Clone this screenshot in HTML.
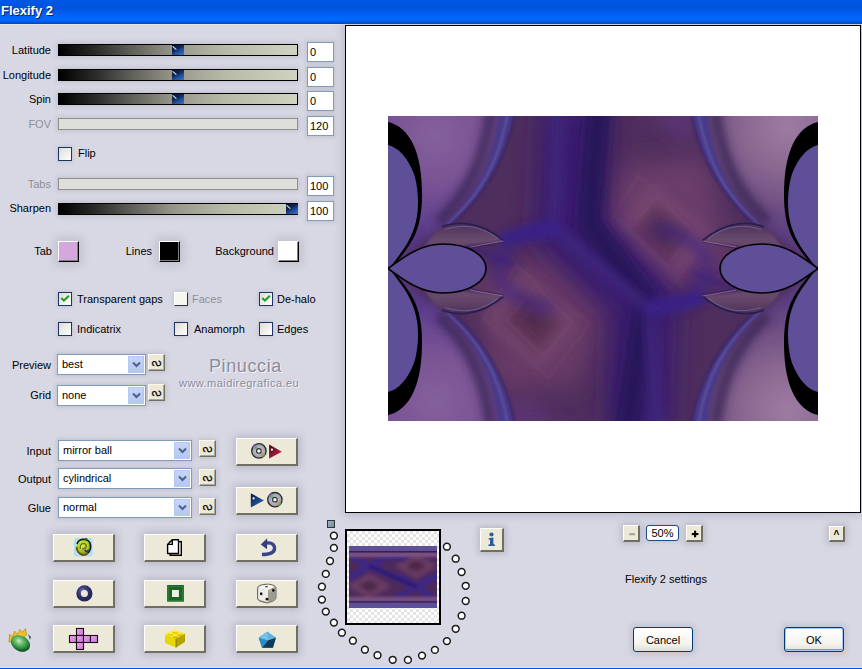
<!DOCTYPE html>
<html><head><meta charset="utf-8">
<style>
*{box-sizing:border-box}
html,body{margin:0;padding:0}
body{width:862px;height:669px;overflow:hidden;position:relative;background:#D8D8E4;font-family:"Liberation Sans",sans-serif;font-size:11px;color:#000}
.a{position:absolute}
#title{left:0;top:0;width:862px;height:25px;background:linear-gradient(#0058E4 0px,#0054DC 8px,#005CEC 12px,#0066FC 17px,#0068FF 20px,#0058E8 22px,#0040C0 24px,#E6E4E8 24px,#E6E4E8 25px)}
#title span{position:absolute;left:1px;top:3px;font-size:13px;font-weight:bold;color:#fff;text-shadow:1px 1px 0 #0A1E6A}
.lbl{position:absolute;text-align:right;white-space:nowrap;line-height:13px}
.trk{position:absolute;left:58px;width:240px;height:12px;border:1px solid #000;background:linear-gradient(90deg,#000 0%,#2a2a28 15%,#5e5e58 30%,#96968a 48%,#b8baa8 70%,#d0d3c0 100%);box-shadow:0 0 5px 1px rgba(90,90,120,.22)}
.trk.dis{background:#DEDEDA;border:1px solid #8E8E8C;box-shadow:0 0 5px 1px rgba(90,90,120,.18)}
.knob{position:absolute;top:0;width:12px;height:10px;background:linear-gradient(150deg,#081634 0%,#0E2654 40%,#1E4E9C 62%,#3676CC 100%)}
.knob:after{content:"";position:absolute;left:1px;top:0.5px;width:5px;height:1.1px;background:#E8ECF4;transform:rotate(42deg);transform-origin:0 0}
.inp{position:absolute;left:307px;width:27px;height:20px;background:#fff;border:1px solid #7F9DB9;padding:3px 0 0 2px;line-height:13px;font-size:11px;box-shadow:0 0 4px 1px rgba(90,90,120,.2)}
.cb{position:absolute;width:14px;height:14px;border:1.5px solid #1C3466;background:linear-gradient(135deg,#DCDCD6,#FFFFFF);box-shadow:0 0 4px rgba(90,90,120,.25)}
.cb.dis{border-color:#fff #333 #333 #fff;background:#F6F6F0}
.cb svg{position:absolute;left:-1.5px;top:-1.5px}
.sw{position:absolute;width:21px;height:21px;border-style:solid;border-width:1px;border-color:#fff #000 #000 #fff;box-shadow:inset -1px -1px 0 #808080,0 0 10px 3px rgba(90,90,120,.2)}
.dd{position:absolute;height:21px;background:#fff;border:1px solid #7F9DB9;line-height:18px;padding-left:4px;font-size:11px;box-shadow:0 0 4px 1px rgba(90,90,120,.2)}
.dd b{position:absolute;right:1px;top:1px;width:16px;height:17px;background:linear-gradient(#C6D4F7,#B4C8F4);border:1px solid #B6C8F0}
.dd b svg{position:absolute;left:3px;top:4px}
.sb{position:absolute;width:17px;height:17px;background:#ECE9D8;border-style:solid;border-width:1px;border-color:#F8F8F0 #716F64 #716F64 #F8F8F0;box-shadow:inset -1px -1px 0 #ACA899,0 0 5px 1px rgba(90,90,120,.22);font-weight:bold;font-size:11px;text-align:center;line-height:14px}
.sb span{position:absolute;left:0.5px;top:0.5px;width:15px;height:15px;line-height:15px;text-align:center;font-weight:normal;font-size:11px;transform:scaleX(-1) rotate(90deg) scale(0.88,1.08);-webkit-text-stroke:0.25px #000}
.bt{position:absolute;width:62px;height:28px;background:#ECE9D8;border-style:solid;border-width:1px 2px 2px 1px;border-color:#fff #716F64 #716F64 #fff;box-shadow:0 0 8px 2px rgba(90,90,120,.28)}
.bt svg{position:absolute;left:0;top:0}
.pb{position:absolute;background:#ECE9D8;border-style:solid;border-width:1px 2px 2px 1px;border-color:#fff #716F64 #716F64 #fff;box-shadow:0 0 6px 2px rgba(90,90,120,.25)}
.xpb{position:absolute;height:25px;border:1px solid #003C74;border-radius:3px;background:linear-gradient(#FFFFFF,#F4F3EE 70%,#E2DFD2);text-align:center;line-height:24px;font-size:11px;box-shadow:0 0 6px 2px rgba(90,90,120,.2)}
.dot{position:absolute;width:9px;height:9px;border-radius:50%;background:#fff;border:1.5px solid #222}
</style></head><body>
<div id="title" class="a"><span>Flexify 2</span></div>
<div class="a" style="left:0;top:667px;width:862px;height:1px;background:#E4E2E6"></div><div class="a" style="left:0;top:668px;width:862px;height:1px;background:#0848F0"></div>

<!-- sliders -->
<div class="lbl" style="left:0;width:51px;top:44px">Latitude</div>
<div class="trk" style="top:44px"><div class="knob" style="left:113px"></div></div>
<div class="inp" style="top:42px">0</div>

<div class="lbl" style="left:0;width:51px;top:69px">Longitude</div>
<div class="trk" style="top:69px"><div class="knob" style="left:113px"></div></div>
<div class="inp" style="top:67px">0</div>

<div class="lbl" style="left:0;width:51px;top:93px">Spin</div>
<div class="trk" style="top:93px"><div class="knob" style="left:113px"></div></div>
<div class="inp" style="top:91px">0</div>

<div class="lbl" style="left:0;width:51px;top:118px;color:#8E8E96">FOV</div>
<div class="trk dis" style="top:118px"></div>
<div class="inp" style="top:116px">120</div>

<div class="cb" style="left:58px;top:147px"></div>
<div class="lbl" style="left:78px;top:147px">Flip</div>

<div class="lbl" style="left:0;width:51px;top:178px;color:#8E8E96">Tabs</div>
<div class="trk dis" style="top:178px"></div>
<div class="inp" style="top:176px">100</div>

<div class="lbl" style="left:0;width:51px;top:202px">Sharpen</div>
<div class="trk" style="top:203px"><div class="knob" style="left:227px"></div></div>
<div class="inp" style="top:201px">100</div>

<!-- swatches -->
<div class="lbl" style="left:0;width:52px;top:245px">Tab</div>
<div class="sw" style="left:58px;top:241px;background:#D4A8DC"></div>
<div class="lbl" style="left:100px;width:52px;top:245px">Lines</div>
<div class="sw" style="left:159px;top:241px;background:#000"></div>
<div class="lbl" style="left:200px;width:74px;top:245px">Background</div>
<div class="sw" style="left:278px;top:241px;background:#fff"></div>

<!-- checkboxes -->
<div class="cb" style="left:58px;top:292px"><svg width="14" height="14" viewBox="0 0 14 14"><path d="M3.2,6.0 L5.9,8.6 L10.9,3.8" stroke="#21A121" stroke-width="2.1" fill="none"/></svg></div>
<div class="lbl" style="left:77px;top:293px">Transparent gaps</div>
<div class="cb dis" style="left:174px;top:292px"></div>
<div class="lbl" style="left:192px;top:293px;color:#8E8E96">Faces</div>
<div class="cb" style="left:259px;top:292px"><svg width="14" height="14" viewBox="0 0 14 14"><path d="M3.2,6.0 L5.9,8.6 L10.9,3.8" stroke="#21A121" stroke-width="2.1" fill="none"/></svg></div>
<div class="lbl" style="left:277px;top:293px">De-halo</div>

<div class="cb" style="left:58px;top:322px"></div>
<div class="lbl" style="left:77px;top:323px">Indicatrix</div>
<div class="cb" style="left:174px;top:322px"></div>
<div class="lbl" style="left:194px;top:323px">Anamorph</div>
<div class="cb" style="left:259px;top:322px"></div>
<div class="lbl" style="left:277px;top:323px">Edges</div>

<!-- preview/grid -->
<div class="lbl" style="left:0;width:51px;top:359px">Preview</div>
<div class="dd" style="left:57px;top:354px;width:89px">best<b><svg width="9" height="7" viewBox="0 0 9 7"><path d="M1 1.5 L4.5 5 L8 1.5" stroke="#4D6185" stroke-width="2" fill="none"/></svg></b></div>
<div class="sb" style="left:148px;top:354px"><span>S</span></div>
<div class="lbl" style="left:0;width:51px;top:389px">Grid</div>
<div class="dd" style="left:57px;top:385px;width:89px">none<b><svg width="9" height="7" viewBox="0 0 9 7"><path d="M1 1.5 L4.5 5 L8 1.5" stroke="#4D6185" stroke-width="2" fill="none"/></svg></b></div>
<div class="sb" style="left:148px;top:384px"><span>S</span></div>

<div class="a" style="left:209px;top:356px;font-size:18px;letter-spacing:0.6px;color:#8C8C9C;text-shadow:1px 1px 0 #F4F4FA">Pinuccia</div>
<div class="a" style="left:179px;top:377px;font-size:11px;letter-spacing:0.45px;color:#8C8C9C;text-shadow:1px 1px 0 #F4F4FA">www.maidiregrafica.eu</div>

<!-- input/output/glue -->
<div class="lbl" style="left:0;width:51px;top:445px">Input</div>
<div class="dd" style="left:58px;top:440px;width:134px;height:21px">mirror ball<b><svg width="9" height="7" viewBox="0 0 9 7"><path d="M1 1.5 L4.5 5 L8 1.5" stroke="#4D6185" stroke-width="2" fill="none"/></svg></b></div>
<div class="sb" style="left:199px;top:440px"><span>S</span></div>
<div class="lbl" style="left:0;width:51px;top:473px">Output</div>
<div class="dd" style="left:58px;top:468px;width:134px;height:21px">cylindrical<b><svg width="9" height="7" viewBox="0 0 9 7"><path d="M1 1.5 L4.5 5 L8 1.5" stroke="#4D6185" stroke-width="2" fill="none"/></svg></b></div>
<div class="sb" style="left:199px;top:469px"><span>S</span></div>
<div class="lbl" style="left:0;width:51px;top:502px">Glue</div>
<div class="dd" style="left:58px;top:497px;width:134px;height:21px">normal<b><svg width="9" height="7" viewBox="0 0 9 7"><path d="M1 1.5 L4.5 5 L8 1.5" stroke="#4D6185" stroke-width="2" fill="none"/></svg></b></div>
<div class="sb" style="left:199px;top:498px"><span>S</span></div>

<!-- big buttons -->
<div class="bt" style="left:236px;top:438px"></div>
<div class="bt" style="left:236px;top:487px"></div>

<div class="bt" style="left:53px;top:534px"></div>
<div class="bt" style="left:144px;top:534px"></div>
<div class="bt" style="left:236px;top:534px"></div>
<div class="bt" style="left:53px;top:580px"></div>
<div class="bt" style="left:144px;top:580px"></div>
<div class="bt" style="left:236px;top:580px"></div>
<div class="bt" style="left:53px;top:625px"></div>
<div class="bt" style="left:144px;top:625px"></div>
<div class="bt" style="left:236px;top:625px"></div>


<svg class="a" style="left:0;top:420px" width="310" height="249" viewBox="0 420 310 249">
<defs>
<radialGradient id="cd" cx="0.5" cy="0.5" r="0.5">
<stop offset="0" stop-color="#fff"/><stop offset="0.2" stop-color="#D8D8E0"/><stop offset="0.6" stop-color="#B0B0BC"/><stop offset="1" stop-color="#9C9CA8"/>
</radialGradient>
<linearGradient id="rb" gradientUnits="userSpaceOnUse" x1="253.5" y1="445.5" x2="264.3" y2="456.3"><stop offset="0" stop-color="#8A50D0"/><stop offset=".3" stop-color="#60C080"/><stop offset=".5" stop-color="#D0D0D8" stop-opacity="0"/><stop offset=".7" stop-color="#F09060"/><stop offset="1" stop-color="#50B060"/></linearGradient>
<linearGradient id="rb2" gradientUnits="userSpaceOnUse" x1="269.5" y1="494.3" x2="280.3" y2="505.1"><stop offset="0" stop-color="#8A50D0"/><stop offset=".3" stop-color="#60C080"/><stop offset=".5" stop-color="#D0D0D8" stop-opacity="0"/><stop offset=".7" stop-color="#F09060"/><stop offset="1" stop-color="#50B060"/></linearGradient>
<linearGradient id="rt" x1="0" y1="0" x2="1" y2="1"><stop offset="0" stop-color="#3A0514"/><stop offset="0.6" stop-color="#A01838"/><stop offset="1" stop-color="#E0305A"/></linearGradient>
<linearGradient id="btri" x1="0" y1="0" x2="1" y2="1"><stop offset="0" stop-color="#0A1A3A"/><stop offset="0.6" stop-color="#1E4C94"/><stop offset="1" stop-color="#3A7AD0"/></linearGradient>
<radialGradient id="dn" cx="0.35" cy="0.3" r="0.7"><stop offset="0" stop-color="#8080C0"/><stop offset="0.5" stop-color="#3C3C78"/><stop offset="1" stop-color="#26265A"/></radialGradient>
<linearGradient id="pink" x1="0" y1="0" x2="1" y2="1"><stop offset="0" stop-color="#F0A8F0"/><stop offset="1" stop-color="#C870D8"/></linearGradient>
<linearGradient id="pent" x1="0" y1="0" x2="1" y2="1"><stop offset="0" stop-color="#70C0E8"/><stop offset="0.5" stop-color="#2E8EC4"/><stop offset="1" stop-color="#103050"/></linearGradient>
<radialGradient id="egg" cx="0.38" cy="0.4" r="0.65"><stop offset="0" stop-color="#D0ECC0"/><stop offset="0.3" stop-color="#70C078"/><stop offset="0.7" stop-color="#2A8A3A"/><stop offset="1" stop-color="#0A4018"/></radialGradient>
<radialGradient id="globe" cx="0.45" cy="0.35" r="0.65"><stop offset="0" stop-color="#E8F040"/><stop offset="0.55" stop-color="#B0D820"/><stop offset="1" stop-color="#7A8010"/></radialGradient>
</defs>
<!-- CD + red triangle -->
<circle cx="258.9" cy="450.9" r="7.2" fill="url(#cd)" stroke="#2A2A2A" stroke-width="1.3"/>
<path d="M253.5,445.5 L264.3,456.3" stroke="url(#rb)" stroke-width="4" opacity=".75"/>
<circle cx="258.9" cy="450.9" r="2.3" fill="#E8E8EC" stroke="#333" stroke-width="1.1"/>
<circle cx="258.9" cy="450.9" r="0.9" fill="#fff"/>
<path d="M269.1,444.4 L281.9,451.8 L269.1,458.6 Z" fill="url(#rt)"/>
<circle cx="271.9" cy="449.7" r="1.1" fill="#fff"/>
<!-- blue triangle + CD -->
<path d="M250.8,493.2 L264,500.4 L250.8,507.4 Z" fill="url(#btri)"/>
<circle cx="253.6" cy="498.4" r="1.1" fill="#fff"/>
<circle cx="274.9" cy="499.7" r="7.2" fill="url(#cd)" stroke="#2A2A2A" stroke-width="1.3"/>
<path d="M269.5,494.3 L280.3,505.1" stroke="url(#rb2)" stroke-width="4" opacity=".75"/>
<circle cx="274.9" cy="499.7" r="2.3" fill="#E8E8EC" stroke="#333" stroke-width="1.1"/>
<circle cx="274.9" cy="499.7" r="0.9" fill="#fff"/>
<!-- globe icon -->
<rect x="74" y="538" width="18.5" height="18.5" rx="3" fill="#A6DCF6" opacity=".9"/>
<rect x="76" y="540" width="14.5" height="14.5" fill="#C8ECFA" opacity=".6"/>
<circle cx="83.4" cy="547.5" r="7.2" fill="url(#globe)"/>
<path d="M77,544 C78,540 82,539 85,539.5 C88,540 90,542 90.5,545 C91,548 90,551 88,553" stroke="#141410" stroke-width="1.6" fill="none"/>
<path d="M76.8,547 C76.5,551 79,554.5 83,555 C85,555.2 87,554.5 88,553" stroke="#6A5010" stroke-width="1.8" fill="none"/>
<path d="M85,550 C86,552 88,552 89,550" stroke="#3A3090" stroke-width="2.2" fill="none"/>
<path d="M80.5,549 C79.5,546 81,543.5 83.5,543.5 C86,543.5 87,546 85.8,548 C85,549.5 83,549.5 82.5,548" stroke="#5A7A20" stroke-width="1.3" fill="none"/>
<path d="M82,551 L86,545" stroke="#8A4A90" stroke-width="0.9" opacity=".7"/>
<circle cx="86" cy="539.2" r="1.5" fill="#2A6A20"/>
<!-- pages -->
<path d="M170.2,541.7 L181.3,541.7 L181.3,555.3 L170.2,555.3 Z" fill="#fff" stroke="#000" stroke-width="1.4"/>
<path d="M172.3,539.7 L178.5,539.7 L178.5,553.5 L167.6,553.5 L167.6,544.4 Z" fill="#fff" stroke="#000" stroke-width="1.4" stroke-linejoin="round"/>
<path d="M167.6,544.4 L172.3,544.4 L172.3,539.7" fill="none" stroke="#000" stroke-width="1.4"/>
<!-- undo -->
<path d="M266.5,543 C273,542 275,546 274.5,549 C274,553 270,554.5 262,554.5" stroke="#3A4488" stroke-width="3.4" fill="none" stroke-linecap="butt"/>
<path d="M260.8,544.5 L267.2,538.3 L267,549.2 Z" fill="#323C80"/>
<!-- donut -->
<circle cx="84.4" cy="593.4" r="5.8" fill="none" stroke="url(#dn)" stroke-width="4.6"/>
<!-- green square -->
<rect x="167.1" y="585" width="16.8" height="16.7" fill="#1E6428"/>
<rect x="172" y="590" width="6.9" height="7" fill="#EEF0E4"/>
<rect x="168.5" y="586.5" width="14" height="14" fill="none" stroke="#2E8A3A" stroke-width="1" opacity=".6"/>
<!-- dice -->
<path d="M257.5,588.5 C257.5,586.5 259,585.5 261,585 L266,584.2 C268,584 270,584.2 272,584.8 L274.5,585.8 C275.8,586.5 276,587.5 276,589 L276,597.5 C276,599 275,600 273.5,600.8 L269.5,602.4 C268,603 266.5,603 265,602.6 L260,601 C258.5,600.4 257.6,599.5 257.6,598 Z" fill="#B8B8B0" stroke="#5A5A52" stroke-width="0.9"/>
<path d="M258.3,588.6 C259,586.6 260.5,586 262,585.6 L266.5,584.9 C268.5,584.7 270.5,585 272,585.6 L274.5,586.8 L268,590.2 Z" fill="#F6F6F2"/>
<path d="M258.3,588.6 L268,590.2 L268,602 L260.5,600 C259,599.5 258.3,598.6 258.3,597.5 Z" fill="#EEEEE8"/>
<path d="M268,590.2 L275.3,587 L275.3,597.8 C275.3,598.8 274.6,599.6 273.4,600.2 L268,602 Z" fill="#9C9C90"/>
<path d="M268.5,590.6 L275,588 L275,590.5 L268.5,593 Z" fill="#C8B890" opacity=".6"/>
<ellipse cx="261.2" cy="593.8" rx="1.3" ry="1.5" fill="#111"/>
<ellipse cx="273.3" cy="590.2" rx="1.3" ry="1.5" fill="#111"/>
<ellipse cx="267" cy="599.2" rx="1.4" ry="1.4" fill="#111"/>
<ellipse cx="266.5" cy="586.8" rx="1.6" ry="0.8" fill="#4A4A50"/>
<!-- plus -->
<g fill="url(#pink)" stroke="#1A1010" stroke-width="1.1">
<rect x="76.5" y="628.5" width="7" height="7"/>
<rect x="69.5" y="635.5" width="7" height="7"/>
<rect x="76.5" y="635.5" width="7" height="7"/>
<rect x="83.5" y="635.5" width="7" height="7"/>
<rect x="90.5" y="635.5" width="7" height="7"/>
<rect x="76.5" y="642.5" width="7" height="7"/>
</g>
<!-- lego brick -->
<path d="M165,634.5 L174.5,630.2 L185,633.8 L185,641.8 L176,647.5 L165,643 Z" fill="#E8D800"/>
<path d="M176,638.6 L185,633.8 L185,641.8 L176,647.5 Z" fill="#B4A200"/>
<path d="M165,634.5 L174.5,630.2 L185,633.8 L176,638.6 Z" fill="#F8EC28"/>
<ellipse cx="170.5" cy="634.2" rx="2.8" ry="1.4" fill="#D8B800"/><ellipse cx="170.5" cy="633.2" rx="2.8" ry="1.4" fill="#FFF040"/>
<ellipse cx="175" cy="632.2" rx="2.8" ry="1.4" fill="#D8B800"/><ellipse cx="175" cy="631.2" rx="2.8" ry="1.4" fill="#FFF040"/>
<ellipse cx="175.5" cy="636.4" rx="2.8" ry="1.4" fill="#C8A000"/><ellipse cx="175.5" cy="635.4" rx="2.8" ry="1.4" fill="#F8E830"/>
<ellipse cx="180" cy="634.4" rx="2.8" ry="1.4" fill="#C8A000"/><ellipse cx="180" cy="633.4" rx="2.8" ry="1.4" fill="#F8E830"/>
<path d="M176,638.6 L176,647.5" stroke="#7A6A00" stroke-width="0.8"/>
<!-- pentagon -->
<path d="M267.3,631.7 L275.9,637.7 L272.9,647.8 L262.1,647.8 L258.7,637.7 Z" fill="#2A86BC"/>
<path d="M258.7,637.7 L267.3,631.7 L275.9,637.7 L268,640.5 Z" fill="#5CB4E0"/>
<path d="M267.3,631.7 L268,640.5 L258.7,637.7 Z" fill="#80C8EC" opacity=".7"/>
<path d="M268,640.5 L275.9,637.7 L272.9,647.8 L262.1,647.8 Z" fill="#103A58"/>
<path d="M258.7,637.7 L268,640.5 L262.1,647.8 Z" fill="#2C8CC4"/>
<!-- egg -->
<path d="M9,642 L9.5,634 L12.5,637 L14.5,631 L17.5,634.5 L20,629.5 L22.5,632.5 L25.5,628.5 L26.5,635 L20,640 Z" fill="#F0C020" stroke="#B88A10" stroke-width="0.7"/>
<ellipse cx="20.5" cy="643.5" rx="10.2" ry="7.6" fill="url(#egg)" transform="rotate(28 20.5 643.5)"/>
<path d="M28,634 L31,637 L30,640 Z" fill="#2A5A30"/>
</svg>

<!-- preview box -->
<div class="a" style="left:345px;top:25px;width:516px;height:488px;background:#fff;border:1.3px solid #000;box-shadow:0 0 8px 2px rgba(90,90,120,.25)"></div>
<svg class="a" style="left:388px;top:116px" width="430" height="305" viewBox="0 0 430 305">
<defs>
<filter id="bl8" filterUnits="userSpaceOnUse" x="-60" y="-60" width="550" height="425"><feGaussianBlur stdDeviation="9"/></filter>
<filter id="bl12" filterUnits="userSpaceOnUse" x="-60" y="-60" width="550" height="425"><feGaussianBlur stdDeviation="13"/></filter>
<filter id="bl6" filterUnits="userSpaceOnUse" x="-60" y="-60" width="550" height="425"><feGaussianBlur stdDeviation="6"/></filter>
<filter id="bl4" filterUnits="userSpaceOnUse" x="-60" y="-60" width="550" height="425"><feGaussianBlur stdDeviation="4"/></filter>
<filter id="bl1" filterUnits="userSpaceOnUse" x="-60" y="-60" width="550" height="425"><feGaussianBlur stdDeviation="0.8"/></filter>
<filter id="bl2" filterUnits="userSpaceOnUse" x="-60" y="-60" width="550" height="425"><feGaussianBlur stdDeviation="1.2"/></filter>
<radialGradient id="gl" gradientUnits="userSpaceOnUse" cx="48" cy="20" r="100">
<stop offset="0" stop-color="#84609C"/><stop offset="0.45" stop-color="#7A5494"/><stop offset="0.8" stop-color="#664490"/><stop offset="1" stop-color="#563886"/>
</radialGradient>
<radialGradient id="gl2" gradientUnits="userSpaceOnUse" cx="30" cy="10" r="110">
<stop offset="0" stop-color="#9E7CA4"/><stop offset="0.4" stop-color="#8A6890"/><stop offset="0.75" stop-color="#6E4E82"/><stop offset="1" stop-color="#5A3C80"/>
</radialGradient>
<linearGradient id="lf" x1="0" y1="0" x2="0" y2="1">
<stop offset="0" stop-color="#4C3258"/><stop offset="0.55" stop-color="#64466A"/><stop offset="1" stop-color="#6C4E72"/>
</linearGradient>
<radialGradient id="dia" cx="0.5" cy="0.5" r="0.5">
<stop offset="0" stop-color="#4A2A4A"/><stop offset="0.35" stop-color="#5C3458"/><stop offset="0.7" stop-color="#744470"/><stop offset="1" stop-color="#744470" stop-opacity="0"/>
</radialGradient>
<clipPath id="clip"><rect width="430" height="305"/></clipPath>


</defs>
<g clip-path="url(#clip)">
<rect width="430" height="305" fill="#4E2E5C"/>
<!-- center mauve areas -->
<path d="M250,-10 L320,-10 L300,30 Z" fill="#5A3472" filter="url(#bl8)"/>
<path d="M235,50 L320,40 L345,160 L262,175 L205,120 Z" fill="#6A3C6A" filter="url(#bl12)"/>
<path d="M180,315 L110,315 L130,275 Z" fill="#5A3472" filter="url(#bl8)"/>
<path d="M190,270 L105,275 L85,155 L165,140 L220,195 Z" fill="#683A66" filter="url(#bl12)"/>
<!-- diamonds -->
<g filter="url(#bl6)" opacity="0.7">
<path d="M266,68 L322,118 L286,168 L226,114 Z" fill="#7A4A72"/>
<path d="M268,86 L304,118 L282,150 L244,115 Z" fill="#5A3454"/>
<path d="M270,102 L288,118 L278,134 L260,116 Z" fill="#4A2A46"/>
<path d="M152,255 L96,205 L132,155 L192,209 Z" fill="#74466E"/>
<path d="M150,237 L114,205 L136,173 L174,208 Z" fill="#583250"/>
<path d="M148,221 L130,205 L140,189 L158,207 Z" fill="#482844"/>
</g>
<g filter="url(#bl2)" fill="none" opacity="0.4">
<path d="M270,80 L306,116 L278,150 L240,114 Z" stroke="#7E4C76" stroke-width="2.5"/>
<path d="M271,96 L292,116 L276,136 L254,115 Z" stroke="#6A3C62" stroke-width="2"/>
<path d="M250,60 L324,118 L282,172 L218,112 Z" stroke="#744670" stroke-width="3"/>
<path d="M148,170 L184,206 L156,240 L118,204 Z" stroke="#7E4C76" stroke-width="2.5"/>
<path d="M149,186 L170,206 L154,226 L132,205 Z" stroke="#6A3C62" stroke-width="2"/>
<path d="M128,150 L202,208 L160,262 L96,202 Z" stroke="#744670" stroke-width="3"/>
</g>
<!-- blue bands -->
<g filter="url(#bl12)">
<path d="M186,-10 L180,112 L256,186 L252,315" stroke="#3A1F70" stroke-width="66" fill="none" stroke-linejoin="round"/>
</g>
<g filter="url(#bl4)">
<path d="M211,-10 L201,108 L258,184 L238,315" stroke="#28145A" stroke-width="24" fill="none" stroke-linejoin="round" filter="url(#bl4)"/>
<path d="M170,-10 L166,112 L262,194 L268,315" stroke="#40247C" stroke-width="14" fill="none" stroke-linejoin="round" opacity=".8"/>
<path d="M112,124 C135,118 150,113 172,114" stroke="#3A2088" stroke-width="13" fill="none"/>
<path d="M318,181 C295,187 280,192 258,191" stroke="#3A2088" stroke-width="13" fill="none"/>
<path d="M62,132 C90,134 110,140 128,150" stroke="#3A2080" stroke-width="9" fill="none" opacity=".55"/>
<path d="M368,173 C340,171 320,165 302,155" stroke="#3A2080" stroke-width="9" fill="none" opacity=".55"/>
</g>
<g>
  <path d="M-10,-10 L115,-10 C106,45 88,80 56,110 C34,126 16,140 0,152 L-10,152 Z" fill="url(#gl)" filter="url(#bl4)"/>
  <path d="M103,-5 C96,45 80,78 50,106" stroke="#3A2656" stroke-width="11" fill="none" opacity="0.85" filter="url(#bl4)"/>
  <path d="M127,-5 C118,45 96,80 62,109 L56,110 C88,80 106,45 111,-5 Z" fill="#4A3A8A" filter="url(#bl1)"/>
  <path d="M120,-5 C112,45 92,80 59,109" stroke="#7060AC" stroke-width="1.6" fill="none" opacity="0.8" filter="url(#bl1)"/>
  <path d="M127,-5 C118,45 96,80 62,109" stroke="#2E1E5A" stroke-width="1.5" fill="none" opacity="0.7" filter="url(#bl1)"/>
  <path d="M165,112 C135,116 114,130 108,152" stroke="#3A2088" stroke-width="16" fill="none" opacity="0.5" filter="url(#bl6)"/>
  <path d="M0,6 C10,8 20,16 26,30 C32,44 34,60 34,80 C34,100 30,116 22,128 C16,138 8,147 0,154 Z" fill="#000"/>
  <path d="M0,29 C10,31 20,42 26,58 C30,70 31,88 29,100 C27,114 20,128 12,138 C8,144 4,149 0,153 Z" fill="#5F4E98"/>
  <path d="M54,111 C66,106 90,103 116,125 C100,127 80,128 62,132 L36,132 C42,122 48,115 54,111 Z" fill="url(#lf)" filter="url(#bl1)"/>
  <path d="M54,111 C66,106 90,103 116,125" stroke="#2A1E50" stroke-width="1.8" fill="none"/>
  <path d="M116,125 C104,127 92,129 82,131" stroke="#8A74A4" stroke-width="1.1" fill="none" opacity="0.7"/>
  <path d="M116,126 C104,128.5 92,130.5 82,132.5" stroke="#2E1E50" stroke-width="1" fill="none" opacity="0.6"/>
  <path d="M57,113.5 C70,109.5 90,106.5 110,123" stroke="#8A78B8" stroke-width="0.9" fill="none" opacity="0.6"/>
</g>
<g transform="translate(0,305) scale(1,-1)">
  <path d="M-10,-10 L115,-10 C106,45 88,80 56,110 C34,126 16,140 0,152 L-10,152 Z" fill="url(#gl)" filter="url(#bl4)"/>
  <path d="M103,-5 C96,45 80,78 50,106" stroke="#3A2656" stroke-width="11" fill="none" opacity="0.85" filter="url(#bl4)"/>
  <path d="M127,-5 C118,45 96,80 62,109 L56,110 C88,80 106,45 111,-5 Z" fill="#4A3A8A" filter="url(#bl1)"/>
  <path d="M120,-5 C112,45 92,80 59,109" stroke="#7060AC" stroke-width="1.6" fill="none" opacity="0.8" filter="url(#bl1)"/>
  <path d="M127,-5 C118,45 96,80 62,109" stroke="#2E1E5A" stroke-width="1.5" fill="none" opacity="0.7" filter="url(#bl1)"/>
  <path d="M165,112 C135,116 114,130 108,152" stroke="#3A2088" stroke-width="16" fill="none" opacity="0.5" filter="url(#bl6)"/>
  <path d="M0,6 C10,8 20,16 26,30 C32,44 34,60 34,80 C34,100 30,116 22,128 C16,138 8,147 0,154 Z" fill="#000"/>
  <path d="M0,29 C10,31 20,42 26,58 C30,70 31,88 29,100 C27,114 20,128 12,138 C8,144 4,149 0,153 Z" fill="#5F4E98"/>
  <path d="M54,111 C66,106 90,103 116,125 C100,127 80,128 62,132 L36,132 C42,122 48,115 54,111 Z" fill="url(#lf)" filter="url(#bl1)"/>
  <path d="M54,111 C66,106 90,103 116,125" stroke="#2A1E50" stroke-width="1.8" fill="none"/>
  <path d="M116,125 C104,127 92,129 82,131" stroke="#8A74A4" stroke-width="1.1" fill="none" opacity="0.7"/>
  <path d="M116,126 C104,128.5 92,130.5 82,132.5" stroke="#2E1E50" stroke-width="1" fill="none" opacity="0.6"/>
  <path d="M57,113.5 C70,109.5 90,106.5 110,123" stroke="#8A78B8" stroke-width="0.9" fill="none" opacity="0.6"/>
</g>
<g transform="translate(430,0) scale(-1,1)">
  <path d="M-10,-10 L115,-10 C106,45 88,80 56,110 C34,126 16,140 0,152 L-10,152 Z" fill="url(#gl2)" filter="url(#bl4)"/>
  <path d="M103,-5 C96,45 80,78 50,106" stroke="#3A2656" stroke-width="11" fill="none" opacity="0.85" filter="url(#bl4)"/>
  <path d="M127,-5 C118,45 96,80 62,109 L56,110 C88,80 106,45 111,-5 Z" fill="#4A3A8A" filter="url(#bl1)"/>
  <path d="M120,-5 C112,45 92,80 59,109" stroke="#7060AC" stroke-width="1.6" fill="none" opacity="0.8" filter="url(#bl1)"/>
  <path d="M127,-5 C118,45 96,80 62,109" stroke="#2E1E5A" stroke-width="1.5" fill="none" opacity="0.7" filter="url(#bl1)"/>
  <path d="M165,112 C135,116 114,130 108,152" stroke="#3A2088" stroke-width="16" fill="none" opacity="0.5" filter="url(#bl6)"/>
  <path d="M0,6 C10,8 20,16 26,30 C32,44 34,60 34,80 C34,100 30,116 22,128 C16,138 8,147 0,154 Z" fill="#000"/>
  <path d="M0,29 C10,31 20,42 26,58 C30,70 31,88 29,100 C27,114 20,128 12,138 C8,144 4,149 0,153 Z" fill="#5F4E98"/>
  <path d="M54,111 C66,106 90,103 116,125 C100,127 80,128 62,132 L36,132 C42,122 48,115 54,111 Z" fill="url(#lf)" filter="url(#bl1)"/>
  <path d="M54,111 C66,106 90,103 116,125" stroke="#2A1E50" stroke-width="1.8" fill="none"/>
  <path d="M116,125 C104,127 92,129 82,131" stroke="#8A74A4" stroke-width="1.1" fill="none" opacity="0.7"/>
  <path d="M116,126 C104,128.5 92,130.5 82,132.5" stroke="#2E1E50" stroke-width="1" fill="none" opacity="0.6"/>
  <path d="M57,113.5 C70,109.5 90,106.5 110,123" stroke="#8A78B8" stroke-width="0.9" fill="none" opacity="0.6"/>
</g>
<g transform="translate(430,305) scale(-1,-1)">
  <path d="M-10,-10 L115,-10 C106,45 88,80 56,110 C34,126 16,140 0,152 L-10,152 Z" fill="url(#gl2)" filter="url(#bl4)"/>
  <path d="M103,-5 C96,45 80,78 50,106" stroke="#3A2656" stroke-width="11" fill="none" opacity="0.85" filter="url(#bl4)"/>
  <path d="M127,-5 C118,45 96,80 62,109 L56,110 C88,80 106,45 111,-5 Z" fill="#4A3A8A" filter="url(#bl1)"/>
  <path d="M120,-5 C112,45 92,80 59,109" stroke="#7060AC" stroke-width="1.6" fill="none" opacity="0.8" filter="url(#bl1)"/>
  <path d="M127,-5 C118,45 96,80 62,109" stroke="#2E1E5A" stroke-width="1.5" fill="none" opacity="0.7" filter="url(#bl1)"/>
  <path d="M165,112 C135,116 114,130 108,152" stroke="#3A2088" stroke-width="16" fill="none" opacity="0.5" filter="url(#bl6)"/>
  <path d="M0,6 C10,8 20,16 26,30 C32,44 34,60 34,80 C34,100 30,116 22,128 C16,138 8,147 0,154 Z" fill="#000"/>
  <path d="M0,29 C10,31 20,42 26,58 C30,70 31,88 29,100 C27,114 20,128 12,138 C8,144 4,149 0,153 Z" fill="#5F4E98"/>
  <path d="M54,111 C66,106 90,103 116,125 C100,127 80,128 62,132 L36,132 C42,122 48,115 54,111 Z" fill="url(#lf)" filter="url(#bl1)"/>
  <path d="M54,111 C66,106 90,103 116,125" stroke="#2A1E50" stroke-width="1.8" fill="none"/>
  <path d="M116,125 C104,127 92,129 82,131" stroke="#8A74A4" stroke-width="1.1" fill="none" opacity="0.7"/>
  <path d="M116,126 C104,128.5 92,130.5 82,132.5" stroke="#2E1E50" stroke-width="1" fill="none" opacity="0.6"/>
  <path d="M57,113.5 C70,109.5 90,106.5 110,123" stroke="#8A78B8" stroke-width="0.9" fill="none" opacity="0.6"/>
</g>
<!-- petals -->
<path d="M0,152.5 C18,139 34,128 55,128 C82,128 98,140 98,152.5 C98,165 82,177 55,177 C34,177 18,166 0,152.5 Z" fill="#5F4E98" stroke="#000" stroke-width="1.6"/>
<path d="M430,152.5 C412,139 396,128 375,128 C348,128 332,140 332,152.5 C332,165 348,177 375,177 C396,177 412,166 430,152.5 Z" fill="#5F4E98" stroke="#000" stroke-width="1.6"/>
</g>
</svg>


<!-- thumbnail -->
<div class="a" style="left:327px;top:520px;width:8px;height:8px;background:linear-gradient(135deg,#9FB4C8,#6E8AA4);border:1px solid #333"></div>
<div class="a" style="left:345px;top:529px;width:96px;height:96px;border:2px solid #000;background-color:#fff;background-image:linear-gradient(45deg,#E4E4E4 25%,transparent 25%,transparent 75%,#E4E4E4 75%),linear-gradient(45deg,#E4E4E4 25%,transparent 25%,transparent 75%,#E4E4E4 75%);background-size:6px 6px;background-position:0 0,3px 3px"></div>
<svg class="a" style="left:349px;top:546px" width="88" height="62" viewBox="0 0 88 62">
<defs><filter id="tb" filterUnits="userSpaceOnUse" x="-20" y="-20" width="128" height="102"><feGaussianBlur stdDeviation="1.5"/></filter>
<filter id="tb2" filterUnits="userSpaceOnUse" x="-20" y="-20" width="128" height="102"><feGaussianBlur stdDeviation="2.5"/></filter>
<clipPath id="tc"><rect width="88" height="62"/></clipPath></defs>
<g clip-path="url(#tc)">
<rect width="88" height="62" fill="#4C2A5A"/>
<g filter="url(#tb2)">
<path d="M67,7 L88,20 L67,33 L46,20 Z" fill="#6C3C66"/>
<path d="M20,27 L42,40 L20,53 L-2,40 Z" fill="#6C3C66"/>
<path d="M67,14 L78,20 L67,26 L56,20 Z" fill="#4A2642"/>
<path d="M20,34 L31,40 L20,46 L9,40 Z" fill="#4A2642"/>
</g>
<g filter="url(#tb)" fill="none" stroke-linecap="round">
<path d="M4,11 L21,20.5 L2,31 M38,11 L21,20.5 L67,40.5 L46,53 M52,31 L67,40.5 L88,30 M67,40.5 L84,52 M38,11 L56,11" stroke="#3C2684" stroke-width="6.5"/>
<path d="M21,20.5 L67,40.5" stroke="#2A1670" stroke-width="3"/>
</g>
<rect x="-5" y="6" width="98" height="5" fill="#7E5282" filter="url(#tb)"/>
<rect x="-5" y="51" width="98" height="4.5" fill="#7E5282" filter="url(#tb)"/>
<rect x="0" y="0" width="88" height="5.2" fill="#5F4E98"/>
<rect x="0" y="5.2" width="88" height="1.2" fill="#2A1A50"/>
<rect x="0" y="55.5" width="88" height="1.2" fill="#2A1A50"/>
<rect x="0" y="56.7" width="88" height="5.3" fill="#5F4E98"/>
</g>
</svg>
<svg class="a" style="left:300px;top:515px" width="180" height="154" viewBox="300 515 180 154"><circle cx="333.9" cy="535.7" r="3.4" fill="#fff" stroke="#1A1A1A" stroke-width="1.5"/><circle cx="333.9" cy="547.9" r="3.4" fill="#fff" stroke="#1A1A1A" stroke-width="1.5"/><circle cx="330" cy="561" r="3.4" fill="#fff" stroke="#1A1A1A" stroke-width="1.5"/><circle cx="325.8" cy="573.9" r="3.4" fill="#fff" stroke="#1A1A1A" stroke-width="1.5"/><circle cx="321.9" cy="586.7" r="3.4" fill="#fff" stroke="#1A1A1A" stroke-width="1.5"/><circle cx="321.9" cy="599.6" r="3.4" fill="#fff" stroke="#1A1A1A" stroke-width="1.5"/><circle cx="325.8" cy="611.6" r="3.4" fill="#fff" stroke="#1A1A1A" stroke-width="1.5"/><circle cx="333.9" cy="622.6" r="3.4" fill="#fff" stroke="#1A1A1A" stroke-width="1.5"/><circle cx="341.9" cy="632.7" r="3.4" fill="#fff" stroke="#1A1A1A" stroke-width="1.5"/><circle cx="352.9" cy="640.7" r="3.4" fill="#fff" stroke="#1A1A1A" stroke-width="1.5"/><circle cx="364.9" cy="649.7" r="3.4" fill="#fff" stroke="#1A1A1A" stroke-width="1.5"/><circle cx="377.5" cy="655.2" r="3.4" fill="#fff" stroke="#1A1A1A" stroke-width="1.5"/><circle cx="392.7" cy="659.8" r="3.4" fill="#fff" stroke="#1A1A1A" stroke-width="1.5"/><circle cx="407.9" cy="659.9" r="3.4" fill="#fff" stroke="#1A1A1A" stroke-width="1.5"/><circle cx="422" cy="655.6" r="3.4" fill="#fff" stroke="#1A1A1A" stroke-width="1.5"/><circle cx="434.9" cy="649.9" r="3.4" fill="#fff" stroke="#1A1A1A" stroke-width="1.5"/><circle cx="446.9" cy="641.1" r="3.4" fill="#fff" stroke="#1A1A1A" stroke-width="1.5"/><circle cx="455.7" cy="628.8" r="3.4" fill="#fff" stroke="#1A1A1A" stroke-width="1.5"/><circle cx="461.6" cy="615.7" r="3.4" fill="#fff" stroke="#1A1A1A" stroke-width="1.5"/><circle cx="465.7" cy="601" r="3.4" fill="#fff" stroke="#1A1A1A" stroke-width="1.5"/><circle cx="465.7" cy="585.8" r="3.4" fill="#fff" stroke="#1A1A1A" stroke-width="1.5"/><circle cx="461.6" cy="572" r="3.4" fill="#fff" stroke="#1A1A1A" stroke-width="1.5"/><circle cx="455.7" cy="558.7" r="3.4" fill="#fff" stroke="#1A1A1A" stroke-width="1.5"/><circle cx="446.9" cy="546.7" r="3.4" fill="#fff" stroke="#1A1A1A" stroke-width="1.5"/></svg>

<div class="pb" style="left:480px;top:528px;width:24px;height:24px"></div>
<svg class="a" style="left:480px;top:528px" width="24" height="24" viewBox="480 528 24 24"><circle cx="491.5" cy="534.5" r="2.1" fill="#2A5C9C"/><path d="M488.6,538.2 L493.4,537.6 L493.4,544.2 L494.9,544.5 L494.9,545.9 L488.5,545.9 L488.5,544.5 L490,544.2 L490,539.6 L488.6,539.4 Z" fill="#2A5C9C"/></svg>
<div class="pb" style="left:623px;top:525px;width:17px;height:17px"></div>
<div class="a" style="left:646px;top:525px;width:33px;height:16px;border:1.3px solid #1C4C8C;border-radius:3px;background:#fff;text-align:center;line-height:15px;box-shadow:0 0 4px rgba(90,90,120,.25)">50%</div>
<div class="pb" style="left:686px;top:525px;width:17px;height:17px"></div>
<svg class="a" style="left:615px;top:518px" width="95" height="30" viewBox="615 518 95 30"><rect x="629.2" y="533.2" width="5.8" height="2" fill="#A4A294"/><rect x="691.8" y="533" width="6.6" height="2.1" fill="#000"/><rect x="694.05" y="530.7" width="2.1" height="6.6" fill="#000"/></svg>
<div class="pb" style="left:829px;top:526px;width:16px;height:16px;text-align:center;line-height:16px;font-weight:bold;font-size:10px">^</div>

<div class="a" style="left:625px;top:573px">Flexify 2 settings</div>
<div class="xpb" style="left:633px;top:627px;width:60px">Cancel</div>
<div class="xpb" style="left:784px;top:627px;width:60px;border-color:#003C74;box-shadow:inset 0 0 0 1px #A8C8F8,inset 0 -1px 0 1px #6A9AE8,0 0 6px 2px rgba(90,90,120,.2)">OK</div>

</body></html>
